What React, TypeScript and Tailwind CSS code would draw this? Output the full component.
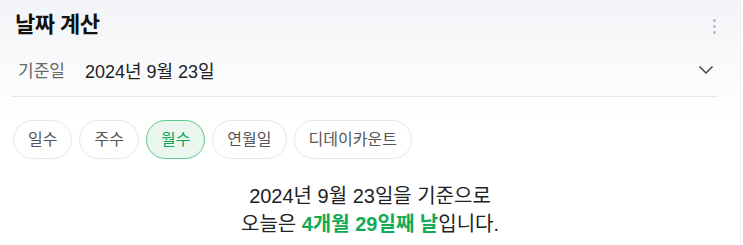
import React, { useState } from 'react';

const TABS = ['일수', '주수', '월수', '연월일', '디데이카운트'];

export default function App() {
  const [tab, setTab] = useState('월수');

  return (
    <div
      className="h-[245px] w-[743px] overflow-hidden bg-white"
      style={{ fontFamily: '"Liberation Sans", "Noto Sans CJK KR", sans-serif' }}
    >
      <div className="h-full w-[740px] bg-gradient-to-b from-[#f2f4f7] via-white to-white shadow-[1px_0_2px_rgba(0,0,0,0.08)]">
        {/* header */}
        <div className="flex h-[48px] items-center justify-between pl-[15px] pr-[24px]">
          <h2 className="text-[22px] font-bold tracking-[-0.5px] text-[#111]">날짜 계산</h2>
          <button aria-label="more" className="flex flex-col gap-[3px] pt-[4px]">
            <span className="h-[3px] w-[3px] rounded-full bg-[#b3bac7]" />
            <span className="h-[3px] w-[3px] rounded-full bg-[#b3bac7]" />
            <span className="h-[3px] w-[3px] rounded-full bg-[#b3bac7]" />
          </button>
        </div>

        {/* base date */}
        <div className="ml-[12px] mr-[22px] flex h-[49px] items-center justify-between border-b border-[#e5e7eb] pl-[6px] pr-[4px]">
          <div className="flex items-center gap-[20px]">
            <span className="text-[17px] text-[#666]">기준일</span>
            <span className="text-[18px] text-[#222]">2024년 9월 23일</span>
          </div>
          <svg width="16" height="10" viewBox="0 0 16 10" fill="none" className="mb-[4px]">
            <path d="M1.5 1.5 8 8l6.5-6.5" stroke="#444" strokeWidth="1.5" />
          </svg>
        </div>

        {/* tabs */}
        <div className="flex gap-[7px] px-[13px] pt-[23px]">
          {TABS.map((t) => {
            const on = t === tab;
            return (
              <button
                key={t}
                onClick={() => setTab(t)}
                className={
                  on
                    ? 'h-[39px] rounded-full border border-[#5dc98d] bg-[#eaf7ef] px-[14px] text-[16px] text-[#0ea55a]'
                    : 'h-[39px] rounded-full border border-[#e8e8e8] bg-white px-[14px] text-[16px] text-[#555]'
                }
              >
                {t}
              </button>
            );
          })}
        </div>

        {/* result */}
        <div className="pt-[23px] text-center text-[20px] leading-[28px] text-[#222]">
          <p>2024년 9월 23일을 기준으로</p>
          <p>
            오늘은 <b className="font-bold text-[#10ab55]">4개월 29일째 날</b>입니다.
          </p>
        </div>
      </div>
    </div>
  );
}
